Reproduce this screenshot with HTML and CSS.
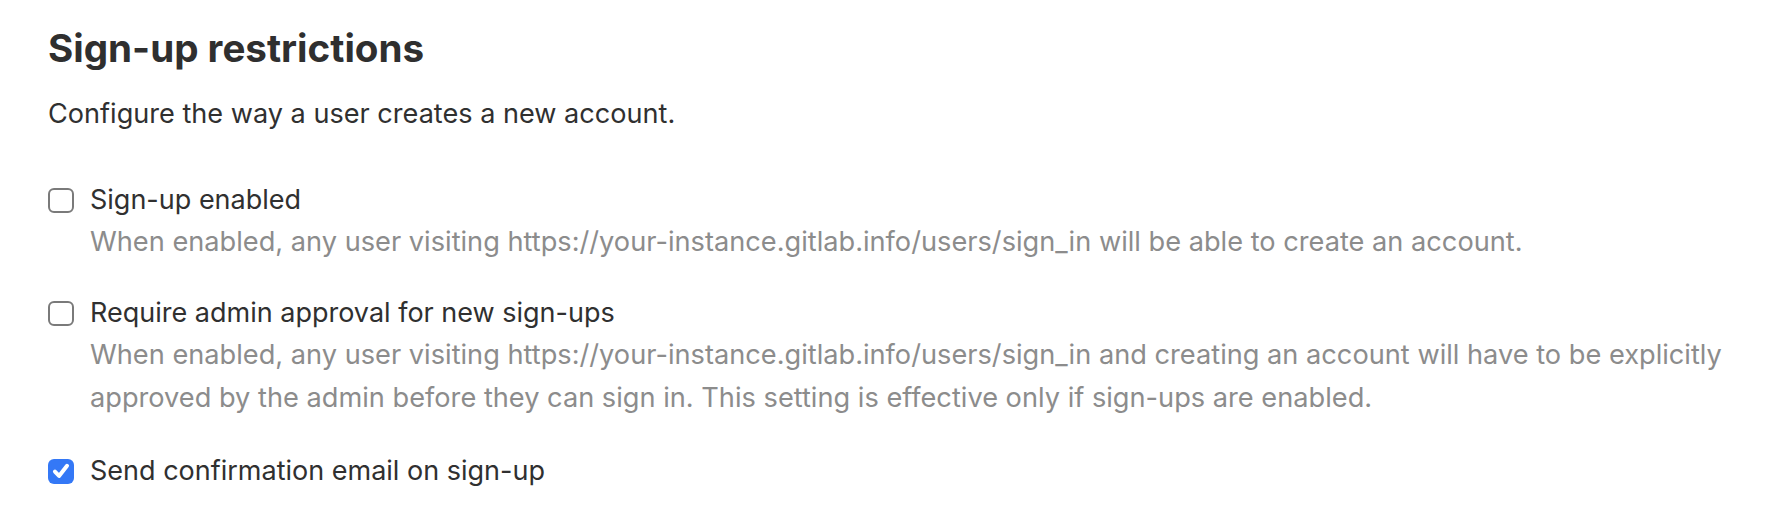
FILE: index.html
```html
<!DOCTYPE html>
<html lang="en">
<head>
<meta charset="utf-8">
<title>Sign-up restrictions</title>
<link rel="stylesheet" href="styles.css">
</head>
<body>
<section class="settings">
  <h4 class="title">Sign-up restrictions</h4>
  <p class="intro">Configure the way a user creates a new account.</p>

  <div class="option first">
    <span class="box"></span>
    <label class="label">Sign-up enabled</label>
    <p class="help">When enabled, any user visiting https://your-instance.gitlab.info/users/sign_in will be able to create an account.</p>
  </div>

  <div class="option">
    <span class="box"></span>
    <label class="label">Require admin approval for new sign-ups</label>
    <p class="help">When enabled, any user visiting https://your-instance.gitlab.info/users/sign_in and creating an account will have to be explicitly approved by the admin before they can sign in. This setting is effective only if sign-ups are enabled.</p>
  </div>

  <div class="option last">
    <span class="box checked"><svg viewBox="0 0 16 16" width="22" height="22"><path d="M3.6 8.4 6.6 11.6 12.4 4.2" fill="none" stroke="#fff" stroke-width="2.9" stroke-linecap="round" stroke-linejoin="round"/></svg></span>
    <label class="label">Send confirmation email on sign-up</label>
  </div>
</section>
</body>
</html>
```

FILE: styles.css
```css
html, body {
  margin: 0;
  padding: 0;
  background: #ffffff;
}

body {
  font-family: Inter, "Noto Sans", "Liberation Sans", sans-serif;
  color: #333333;
}

.settings {
  padding: 23px 48px 0 48px;
  width: 1688px;
}

.title {
  margin: 0;
  font-size: 38.6px;
  line-height: 50px;
  font-weight: 700;
  color: #2f2f2f;
}

.intro {
  margin: 22px 0 0 0;
  font-size: 27.1px;
  line-height: 38px;
  color: #303030;
}

.option {
  display: grid;
  grid-template-columns: 26px 1fr;
  column-gap: 16px;
  margin-top: 30px;
}

.option.first {
  margin-top: 47px;
}

.option.last {
  margin-top: 32px;
}

.box {
  grid-column: 1;
  grid-row: 1;
  align-self: center;
  width: 26px;
  height: 25px;
  box-sizing: border-box;
  border: 2px solid #7a7a7a;
  border-radius: 6px;
  background: #fff;
  display: flex;
  align-items: center;
  justify-content: center;
}

.box.checked {
  border: none;
  background: #3478f6;
}

.label {
  grid-column: 2;
  grid-row: 1;
  font-size: 27px;
  line-height: 40px;
  color: #303030;
}

.help {
  grid-column: 2;
  grid-row: 2;
  margin: 0;
  font-size: 27.2px;
  line-height: 43px;
  color: #8c8c8c;
}
```
